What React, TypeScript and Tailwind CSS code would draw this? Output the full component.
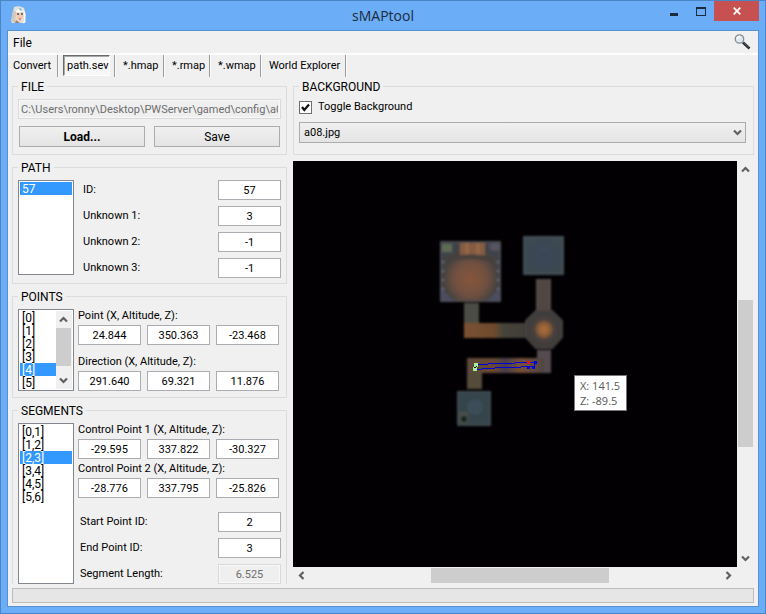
import type { ReactNode } from "react";

const field =
  "h-5 min-w-0 border border-[#abadb3] bg-white text-center text-black outline-none";
const disabledField =
  "h-5 min-w-0 border border-[#d9d9d9] bg-[#efefef] text-[#6d6d6d] shadow-[inset_0_0_0_1px_#f9f9f9] outline-none";
const pushButton =
  "h-[21px] flex-1 border border-[#acacac] bg-gradient-to-b from-[#f0f0f0] to-[#e4e4e4] text-center text-[12px]";

function Group({ title, className = "", children }: { title: string; className?: string; children: ReactNode }) {
  return (
    <fieldset className={`min-w-0 border border-[#dcdcdc] px-[5px] ${className}`}>
      <legend className="h-[13px] px-[3px] text-[12px] leading-[15px]">{title}</legend>
      {children}
    </fieldset>
  );
}

function Chevron({ dir }: { dir: "up" | "down" | "left" | "right" }) {
  const d = {
    up: "M1 6.5 4.5 3 8 6.5",
    down: "M1 2.5 4.5 6 8 2.5",
    left: "M6.5 1 3 4.5 6.5 8",
    right: "M2.5 1 6 4.5 2.5 8",
  }[dir];
  return (
    <svg width="9" height="9" viewBox="0 0 9 9" fill="none" stroke="#606060" strokeWidth="2.2" aria-hidden="true">
      <path d={d} />
    </svg>
  );
}

function ListBox({ label, items, selected, scroll = false }: { label: string; items: string[]; selected: string; scroll?: boolean }) {
  return (
    <div className="flex w-14 shrink-0 border border-[#828790] bg-white p-px">
      <select
        size={items.length < 2 ? 2 : items.length}
        defaultValue={selected}
        aria-label={label}
        className="h-0 min-h-full min-w-0 flex-1 overflow-hidden border-0 bg-white p-0 text-[12px] outline-none [scrollbar-width:none]"
      >
        {items.map((item) => (
          <option
            key={item}
            className="block h-[13px] min-h-0 p-0 pl-0.5 leading-[14px] text-black checked:bg-[#3399ff] checked:bg-[linear-gradient(#3399ff,#3399ff)] checked:text-white"
          >
            {item}
          </option>
        ))}
      </select>
      {scroll && (
        <div className="flex w-4 flex-col items-center bg-[#f0f0f0] pr-px">
          <span className="flex h-[17px] items-center"><Chevron dir="up" /></span>
          <span className="h-[38px] w-[15px] bg-[#cdcdcd]" />
          <span className="mt-auto flex h-[17px] items-center"><Chevron dir="down" /></span>
        </div>
      )}
    </div>
  );
}

function Row({ id, label, value, disabled = false }: { id: string; label: string; value: string; disabled?: boolean }) {
  return (
    <div className="flex items-center justify-between">
      <label htmlFor={id}>{label}</label>
      <input id={id} defaultValue={value} disabled={disabled} className={`w-[63px] text-center ${disabled ? disabledField : field}`} />
    </div>
  );
}

function Triple({ label, values }: { label: string; values: string[] }) {
  return (
    <div role="group" aria-label={label}>
      <div className="h-4 leading-[14px]">{label}</div>
      <div className="flex gap-1.5">
        {values.map((v, i) => (
          <input key={i} aria-label={`${label} ${i + 1}`} defaultValue={v} className={`w-[63px] ${field}`} />
        ))}
      </div>
    </div>
  );
}

function Avatar() {
  return (
    <svg width="17" height="18" viewBox="0 0 17 18" aria-hidden="true">
      <path d="M4 1Q9-1 14 2L16 9 15 17 2 17 1 15Z" fill="#e4e0da" />
      <path d="M3 4 1 15 5 17 6 6Z" fill="#cfc9c0" />
      <path d="M6 5Q9 3 13 6L13 11 10 16 7 13Z" fill="#f3c9ae" />
      <path d="M6 5Q9 1 14 5L12 6 7 7Z" fill="#faf8f4" />
      <path d="M7 8h2M11 8h2" stroke="#4b5668" strokeWidth="1.3" />
      <path d="M9 3h2v2" stroke="#56b6b8" fill="none" />
      <path d="M9 13h2" stroke="#b75d4e" />
      <path d="M6 14 10 17 5 17Z" fill="#9a8170" />
      <path d="M14 5 15 16 13 17" stroke="#fff" fill="none" />
    </svg>
  );
}

function Magnifier() {
  return (
    <svg width="17" height="16" viewBox="0 0 17 16" aria-hidden="true">
      <path d="M9 8.5 15.5 14.5" stroke="#20242a" strokeWidth="2.6" />
      <path d="M9.5 8.5 15 13.5" stroke="#77808a" strokeWidth=".7" />
      <circle cx="5.5" cy="5" r="4.2" fill="#dce9f2" stroke="#858b92" strokeWidth="1.3" />
      <path d="M3 5Q3 2.5 6 2.5" fill="none" stroke="#fff" strokeWidth="1.5" />
    </svg>
  );
}

function DungeonMap() {
  return (
    <svg className="block h-full w-full" viewBox="0 0 444 406" preserveAspectRatio="xMidYMid slice" role="img" aria-label="Dungeon map">
      <defs>
        <filter id="soft" x="-10%" y="-10%" width="120%" height="120%"><feGaussianBlur stdDeviation="1.1" /></filter>
        <radialGradient id="hall" cy=".62" r=".55">
          <stop offset="0" stopColor="#86553a" /><stop offset=".5" stopColor="#705040" /><stop offset=".8" stopColor="#46423f" /><stop offset="1" stopColor="#414349" />
        </radialGradient>
        <radialGradient id="orb">
          <stop offset="0" stopColor="#b0703c" /><stop offset=".35" stopColor="#8a5a38" /><stop offset=".55" stopColor="#48403c" /><stop offset="1" stopColor="#3d3c3c" />
        </radialGradient>
        <radialGradient id="blueRoom">
          <stop offset="0" stopColor="#3a4558" /><stop offset="1" stopColor="#3c4850" />
        </radialGradient>
        <linearGradient id="passA"><stop offset="0" stopColor="#7b5232" /><stop offset=".5" stopColor="#6d4a2e" /><stop offset=".65" stopColor="#46433a" /><stop offset="1" stopColor="#3f3e38" /></linearGradient>
        <linearGradient id="passB"><stop offset="0" stopColor="#5e4a3b" /><stop offset=".35" stopColor="#6a4834" /><stop offset=".5" stopColor="#48404a" /><stop offset=".7" stopColor="#7a5138" /><stop offset="1" stopColor="#4d4444" /></linearGradient>
      </defs>
      <rect x="-400" y="-400" width="1244" height="1206" fill="#020003" />
      <g filter="url(#soft)">
        <rect x="147" y="80" width="61" height="61" fill="url(#hall)" />
        <rect x="167" y="82" width="25" height="13" fill="#855b42" />
        <path d="M174 82v12M185 82v12" stroke="#9a6a48" strokeWidth="3" />
        <rect x="149" y="83" width="10" height="8" fill="#5d6a55" />
        <ellipse cx="202" cy="86" rx="6" ry="4" fill="#565264" />
        <path d="M154 99Q177 92 201 99" stroke="#45403c" strokeWidth="5" fill="none" opacity=".8" />
        <path d="M147 126 162 141H147ZM208 126 193 141H208Z" fill="#4b4d60" />
        <path d="M150 100v36M205 100v36" stroke="#6b6c7a" strokeWidth="2" strokeDasharray="2 7" />
        <path d="M148 81h59v59h-59z" stroke="#53555a" strokeWidth="1" fill="none" />
        <rect x="230" y="75" width="41" height="39" fill="url(#blueRoom)" />
        <path d="M231 76 250 90 270 76" stroke="#48545f" fill="none" opacity=".6" />
        <path d="M231 76h39v37h-39z" stroke="#4a5659" fill="none" />
        <rect x="243" y="118" width="15" height="31" fill="#514642" />
        <path d="M244 118v30M257 118v30" stroke="#5f534e" />
        <path d="M171 142h15v22h-15z" fill="#4c4d43" />
        <rect x="171" y="162" width="61" height="15" fill="url(#passA)" />
        <path d="m243 150h16l10 10v16l-10 11h-16l-10-11v-16z" fill="url(#orb)" stroke="#46413e" strokeWidth="2" />
        <rect x="244" y="189" width="14" height="23" fill="#554b50" />
        <rect x="174" y="197" width="77" height="15" fill="url(#passB)" />
        <rect x="174" y="211" width="15" height="17" fill="#554b3b" />
        <rect x="164" y="230" width="34" height="35" fill="#36444c" />
        <path d="M165 231h32v33h-32z" stroke="#4a5553" fill="none" />
        <ellipse cx="182" cy="246" rx="8" ry="8" fill="#3d4e59" />
        <path d="M166 251h9v11h-9z" fill="#465048" />
        <circle cx="171" cy="258" r="3" fill="#18201d" />
      </g>
      <g shapeRendering="crispEdges">
        <g fill="#0000d8">
          <path d="M184 203h11v1h-11zM195 202h27v1h-27zM222 201h19v1h-19z" />
          <path d="M184 208h5v1h-5zM189 207h13v1h-13zM202 206h26v1h-26zM228 205h12v1h-12zM241 203h1v2h-1z" />
          <path d="M241 200h3v3h-3zM234 205h3v3h-3zM239 205h3v3h-3z" />
        </g>
        <path d="M181 202h4v4h-4zM180 206h4v4h-4z" fill="#a0f0a0" />
        <path d="M181 206h2v-1h1v1h-1v1h-2z" fill="#101010" />
        <path d="M234 200h3v3h-3z" fill="#e01020" />
      </g>
    </svg>
  );
}

const tabs: [string, string][] = [
  ["Convert", "w-[50px] pl-[5px]"],
  ["path.sev", "w-[57px] pl-[5px]"],
  ["*.hmap", "w-[49px] pl-2"],
  ["*.rmap", "w-[46px] pl-2"],
  ["*.wmap", "w-[51px] pl-2"],
  ["World Explorer", "w-[85px] pl-2"],
];

export default function App() {
  return (
    <div className="flex min-h-screen flex-col border border-[#4a86c6] bg-[#6badf6] px-1.5 pb-1.5 font-['Roboto','Liberation_Sans',sans-serif] text-[11px] leading-[14px] text-black">
      <header className="grid h-[29px] grid-cols-[1fr_auto_1fr] items-start">
        <span className="pt-[5px] pl-[3px]"><Avatar /></span>
        <h1 className="pt-[5px] font-['Open_Sans',sans-serif] text-[14px] leading-5 text-[#1c2a3c]">sMAPtool</h1>
        <div className="flex h-5 justify-end">
          <button aria-label="Minimize" className="flex w-7 items-center justify-center">
            <svg width="8" height="20" viewBox="0 0 8 20"><path d="M0 12h8v3H0z" fill="#1b2a3f" /></svg>
          </button>
          <button aria-label="Maximize" className="flex w-[26px] items-center justify-center">
            <svg width="10" height="20" viewBox="0 0 10 20"><path d="M0 6h10v9H0zM1 8v6h8V8z" fill="#1b2a3f" fillRule="evenodd" /></svg>
          </button>
          <button aria-label="Close" className="flex w-[45px] items-center justify-center bg-[#c75050]">
            <svg width="8" height="8" viewBox="0 0 8 8" stroke="#fff" strokeWidth="1.7"><path d="M.7.7 7.300 7.300M7.300.7.7 7.300" /></svg>
          </button>
        </div>
      </header>

      <main className="flex flex-1 flex-col border border-[#5492d4] bg-[#f0f0f0]">
        <nav className="flex h-6 items-start justify-between border-b-2 border-[#fdfdfd] pr-[7px] pl-[5px]">
          <button className="h-[22px] pt-0.5 text-[12px]">File</button>
          <button aria-label="Search" className="pt-[3px]"><Magnifier /></button>
        </nav>
        <div role="tablist" className="flex h-[22px]">
          {tabs.map(([name, size]) => (
            <div key={name} className={`shrink-0 border-r border-[#9c9c9c] shadow-[1px_0_0_#fafafa] ${size}`}>
              {name === "path.sev" ? (
                <button role="tab" aria-selected="true" className="h-[21px] w-[47px] border border-t-[#6a6a6a] border-r-white border-b-white border-l-[#6a6a6a] bg-[#f7f7f7] pt-px pl-[3px] text-left whitespace-nowrap shadow-[inset_1px_1px_0_#a8a8a8]">
                  {name}
                </button>
              ) : (
                <button role="tab" aria-selected="false" className="h-[21px] whitespace-nowrap">{name}</button>
              )}
            </div>
          ))}
        </div>

        <div className="flex flex-1 gap-1.5 px-1 pt-[3px]">
          <div className="flex w-[275px] shrink-0 flex-col gap-1.5">
            <Group title="FILE" className="pt-1.5 pb-[7px]">
              <input aria-label="File path" disabled defaultValue="C:\Users\ronny\Desktop\PWServer\gamed\config\a08\path.sev" className={`block w-full px-0.5 ${disabledField}`} />
              <div className="mt-[7px] flex gap-[9px] px-px">
                <button className={`font-bold ${pushButton}`}>Load...</button>
                <button className={pushButton}>Save</button>
              </div>
            </Group>

            <Group title="PATH" className="pt-1.5 pb-[5px]">
              <div className="flex gap-[9px]">
                <div className="flex pb-[3px]"><ListBox label="Path" items={["57"]} selected="57" /></div>
                <div className="flex flex-1 flex-col gap-1.5">
                  <Row id="pid" label="ID:" value="57" />
                  <Row id="u1" label="Unknown 1:" value="3" />
                  <Row id="u2" label="Unknown 2:" value="-1" />
                  <Row id="u3" label="Unknown 3:" value="-1" />
                </div>
              </div>
            </Group>

            <Group title="POINTS" className="pt-1.5 pb-1.5">
              <div className="flex gap-1">
                <ListBox label="Points" items={["[0]", "[1]", "[2]", "[3]", "[4]", "[5]"]} selected="[4]" scroll />
                <div className="flex flex-col gap-2.5">
                  <Triple label="Point (X, Altitude, Z):" values={["24.844", "350.363", "-23.468"]} />
                  <Triple label="Direction (X, Altitude, Z):" values={["291.640", "69.321", "11.876"]} />
                </div>
              </div>
            </Group>

            <Group title="SEGMENTS" className="flex-1 border-b-0 pt-1.5">
              <div className="flex gap-1">
                <ListBox label="Segments" items={["[0,1]", "[1,2]", "[2,3]", "[3,4]", "[4,5]", "[5,6]"]} selected="[2,3]" />
                <div className="flex flex-1 flex-col">
                  <div className="flex flex-col gap-[3px]">
                    <Triple label="Control Point 1 (X, Altitude, Z):" values={["-29.595", "337.822", "-30.327"]} />
                    <Triple label="Control Point 2 (X, Altitude, Z):" values={["-28.776", "337.795", "-25.826"]} />
                  </div>
                  <div className="mt-3.5 flex flex-col gap-1.5 pl-0.5">
                    <Row id="sp" label="Start Point ID:" value="2" />
                    <Row id="ep" label="End Point ID:" value="3" />
                    <Row id="sl" label="Segment Length:" value="6.525" disabled />
                  </div>
                </div>
              </div>
            </Group>
          </div>

          <div className="flex min-w-0 flex-1 flex-col gap-1.5">
            <Group title="BACKGROUND" className="pt-[7px] pr-[7px] pb-[11px]">
              <label className="flex items-center gap-1.5">
                <span className="grid">
                  <input type="checkbox" defaultChecked className="peer col-start-1 row-start-1 h-[13px] w-[13px] appearance-none border border-[#707070] bg-white" />
                  <svg className="pointer-events-none invisible col-start-1 row-start-1 peer-checked:visible" width="13" height="13" viewBox="0 0 13 13" fill="none" stroke="#111" strokeWidth="2.200" aria-hidden="true">
                    <path d="M3 6 5.300 9 10 3.500" />
                  </svg>
                </span>
                Toggle Background
              </label>
              <div className="mt-2 grid items-center">
                <select aria-label="Background image" className="col-start-1 row-start-1 h-[21px] w-full appearance-none border border-[#acacac] bg-gradient-to-b from-[#f0f0f0] to-[#e4e4e4] pl-1 outline-none">
                  <option>a08.jpg</option>
                </select>
                <span className="pointer-events-none col-start-1 row-start-1 mr-1 justify-self-end"><Chevron dir="down" /></span>
              </div>
            </Group>

            <div className="grid flex-1 grid-cols-[1fr_15px] grid-rows-[1fr_15px] gap-px pr-px pb-px">
              <div className="relative min-h-0 min-w-0 overflow-hidden bg-[#020003]">
                <DungeonMap />
                <div className="absolute top-[214px] left-[281px] border border-[#767676] bg-white py-0.5 pr-1.5 pl-[5px] font-['Open_Sans',sans-serif] text-[11px] leading-[15px] whitespace-nowrap text-[#575757]">
                  X: 141.5<br />Z: -89.5
                </div>
              </div>
              <div className="flex flex-col items-center">
                <span className="flex h-[17px] items-center"><Chevron dir="up" /></span>
                <span className="flex-[122]" />
                <span className="w-full flex-[147] bg-[#cdcdcd]" />
                <span className="flex-[103]" />
                <span className="flex h-[17px] items-center"><Chevron dir="down" /></span>
              </div>
              <div className="flex items-center">
                <span className="flex w-[17px] justify-center"><Chevron dir="left" /></span>
                <span className="flex-[121]" />
                <span className="h-full flex-[178] bg-[#cdcdcd]" />
                <span className="flex-[111]" />
                <span className="flex w-[17px] justify-center"><Chevron dir="right" /></span>
              </div>
            </div>
          </div>
        </div>
        <footer className="mx-1 mt-1 mb-[3px] h-[15px] border border-[#bcbcbc] bg-[#e6e6e6]" />
      </main>
    </div>
  );
}
